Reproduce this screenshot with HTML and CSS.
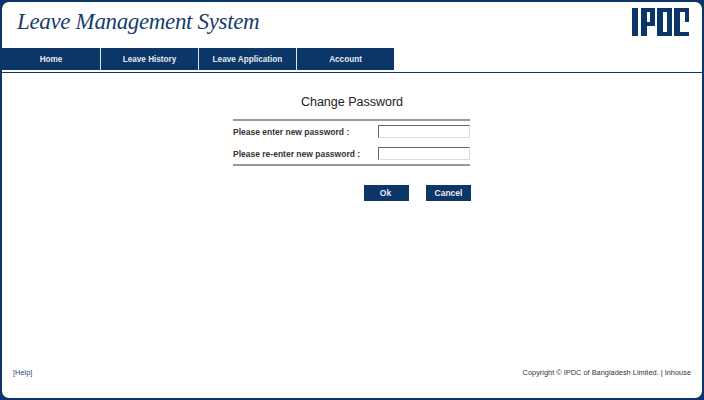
FILE: index.html
```html
<!DOCTYPE html>
<html lang="en">
<head>
<meta charset="utf-8">
<title>Leave Management System</title>
<link rel="stylesheet" href="styles.css">
</head>
<body>
<div class="frame">
  <header class="header">
    <h1 class="brand">Leave Management System</h1>
    <svg class="logo" viewBox="0 0 57 28" role="img" aria-label="IPDC">
      <g fill="#0c3568" fill-rule="evenodd">
        <rect x="0" y="0" width="6" height="28"/>
        <path d="M9 0H23V18H15V28H9ZM15 4V14H18V4Z"/>
        <path d="M25 0H40V28H25ZM31 4V24H35V4Z"/>
        <path d="M42 0H57V14H53V4H48V24H57V28H42Z"/>
      </g>
    </svg>
  </header>
  <nav class="nav">
    <a class="nav-item" href="#">Home</a>
    <a class="nav-item" href="#">Leave History</a>
    <a class="nav-item" href="#">Leave Application</a>
    <a class="nav-item" href="#">Account</a>
  </nav>
  <main class="main">
    <h2 class="title">Change Password</h2>
    <div class="fields">
      <div class="field">
        <label class="label" for="p1">Please enter new password :</label>
        <input class="input" id="p1" type="password">
      </div>
      <div class="field">
        <label class="label" for="p2">Please re-enter new password :</label>
        <input class="input" id="p2" type="password">
      </div>
    </div>
    <div class="actions">
      <button class="btn btn-ok" type="button">Ok</button>
      <button class="btn" type="button">Cancel</button>
    </div>
  </main>
  <footer class="footer">
    <a class="help" href="#">[Help]</a>
    <span class="copy">Copyright © IPDC of Bangladesh Limited. | Inhouse</span>
  </footer>
</div>
</body>
</html>
```
FILE: styles.css
```css
* { box-sizing: border-box; }
html, body { margin: 0; padding: 0; background: #0c3568; }
body { width: 704px; height: 400px; overflow: hidden; font-family: "Liberation Sans", Arial, sans-serif; }
.frame {
  width: 704px; height: 400px;
  background: #fff;
  border: 2px solid #0c3568;
  border-radius: 9px;
  display: flex; flex-direction: column;
}
.header {
  height: 46px; flex: none;
  display: flex; justify-content: space-between; align-items: flex-start;
  padding: 0 13px 0 15px;
}
.brand {
  margin: 4px 0 0; font: italic 400 23px/32px "Liberation Serif", "Times New Roman", serif;
  color: #173d6e; letter-spacing: -0.35px;
}
.logo { width: 57px; height: 28px; margin-top: 6px; }
.nav {
  height: 25px; flex: none;
  display: flex; align-items: flex-start;
  border-bottom: 1px solid #0c3568;
}
.nav-item {
  width: 98px; height: 22px;
  background: #0c3568; color: #e4e9f0;
  border-right: 1px solid #dfe6ee;
  font-size: 8.2px; font-weight: 700; line-height: 23px; text-align: center; text-decoration: none;
}
.nav-item:first-child { width: 99px; }
.nav-item:last-child { width: 97px; border-right: 0; }
.main { flex: 1; display: flex; flex-direction: column; align-items: center; }
.title { margin: 21px 0 0; font-size: 12.5px; font-weight: 400; line-height: 16px; color: #222; }
.fields {
  width: 237px; margin: 9px 1px 0 0; padding: 4px 0 4px;
  border-top: 2px solid #999; border-bottom: 2px solid #999;
  display: flex; flex-direction: column; gap: 9px;
}
.field { display: flex; justify-content: space-between; align-items: center; height: 13px; }
.label { font-size: 8.5px; font-weight: 700; color: #333; }
.input {
  width: 92px; height: 13px; padding: 0;
  background: #fff; outline: 0;
  border: 1px solid #dcdcdc; border-top: 1px solid #666; border-left: 1px solid #666;
}
.actions { width: 238px; margin-top: 19px; display: flex; justify-content: flex-end; gap: 17px; }
.btn {
  width: 45px; height: 16px; padding: 0; border: 0;
  background: #0c3568; color: #e8ecf2;
  font: 700 8.5px/16px "Liberation Sans", Arial, sans-serif;
}
.btn-ok { padding-right: 2px; }
.footer {
  flex: none; height: 30px;
  display: flex; justify-content: space-between; align-items: flex-start;
  padding: 0 11px;
  font-size: 7.4px; line-height: 10px;
}
.help { color: #2a4a78; text-decoration: none; }
.copy { color: #333; }
```
